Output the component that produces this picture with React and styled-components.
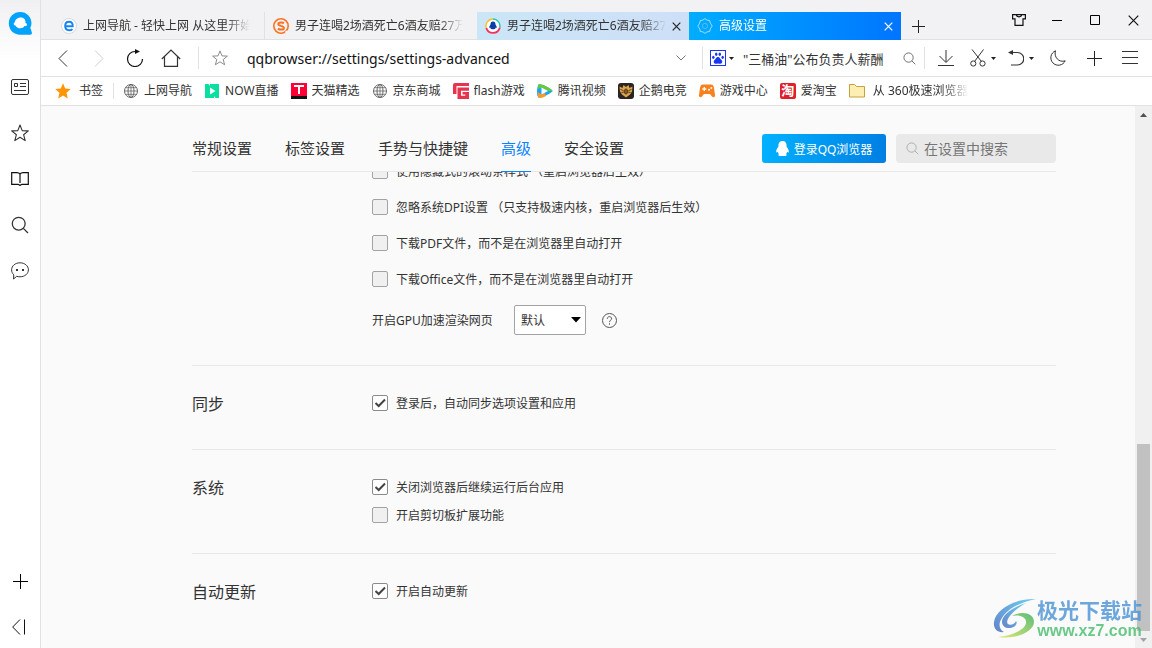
import React from 'react'
import styled, { createGlobalStyle } from 'styled-components';

const GlobalStyle = createGlobalStyle`
  * {
    box-sizing: border-box;
  }
  body {
    margin: 0;
    color: #333;
    background: #fafafa;
    font-family: 'Noto Sans', 'Noto Sans CJK SC', sans-serif;
    font-size: 12px;
  }
  button, input, select {
    font-family: inherit;
    color: inherit;
  }
  svg {
    display: block;
    flex: none;
  }
`

const Shell = styled.div`
  display: flex;
  min-height: 100vh;
  position: relative;
`

const Sidebar = styled.aside`
  flex: none;
  width: 41px;
  display: flex;
  flex-direction: column;
  align-items: center;
  gap: 4px;
  border-right: 1px solid #e1e1e3;
  background: linear-gradient(#f0f0f2, #fff 60px);
`

const Brand = styled.div`
  height: 62px;
  padding-top: 11px;
`

const SideButton = styled.button`
  display: flex;
  align-items: center;
  justify-content: center;
  width: 40px;
  height: 42px;
  padding: 0;
  border: none;
  background: none;
  cursor: pointer;
`

const Spacer = styled.div`
  flex: 1;
`

const Browser = styled.div`
  flex: 1;
  min-width: 0;
  display: flex;
  flex-direction: column;
`

const TabBar = styled.div`
  display: flex;
  height: 40px;
  padding-left: 12px;
  background: #f2f2f4;
  box-shadow: inset 0 -1px #e1e1e3;
`

const Tab = styled.div`
  display: flex;
  align-items: center;
  flex: 0 1 212px;
  min-width: 0;
  height: 28px;
  margin-top: 12px;
  padding: 0 8px;
  background: ${props => props.$bg || 'none'};
  color: ${props => props.$color || '#333'};
  border-right: ${props => props.$line ? '1px solid #e1e1e3' : 'none'};
`

const TabTitle = styled.span`
  flex: 1;
  min-width: 0;
  margin: 0 6px;
  overflow: hidden;
  white-space: nowrap;
  line-height: 20px;
  mask-image: linear-gradient(to left, transparent, #000 24px);
`

const IconButton = styled.button`
  display: flex;
  align-items: center;
  justify-content: center;
  gap: 5px;
  flex: none;
  width: ${props => props.$w || 'auto'};
  height: ${props => props.$h || 'auto'};
  padding: ${props => props.$pad || '0'};
  border: none;
  background: none;
  cursor: pointer;
`

const Toolbar = styled.div`
  display: flex;
  align-items: center;
  height: 37px;
  padding: 0 4px;
  background: #fff;
  border-bottom: 1px solid #e1e1e3;
`

const Divider = styled.span`
  flex: none;
  width: 1px;
  height: ${props => props.$h || '22px'};
  margin: ${props => props.$m || '0'};
  background: #e1e1e3;
`

const AddressInput = styled.input`
  flex: 1;
  min-width: 0;
  height: 30px;
  padding: 0;
  border: none;
  outline: none;
  background: none;
  color: #111;
  font-size: 14px;
`

const SearchBox = styled.form`
  display: flex;
  align-items: center;
  flex: 0 1 221px;
  min-width: 0;
  padding: 0 8px 0 7px;
`

const SearchInput = styled.input`
  flex: 1;
  min-width: 0;
  height: 30px;
  margin-left: 9px;
  padding: 0;
  border: none;
  outline: none;
  background: none;
  font-size: 13px;
`

const Bookmarks = styled.nav`
  display: flex;
  align-items: center;
  height: 29px;
  padding-left: 14px;
  background: #fff;
  border-bottom: 1px solid #e1e1e3;
  overflow: hidden;
`

const Bookmark = styled.a`
  display: flex;
  align-items: center;
  gap: ${props => props.$wide ? '8px' : '5px'};
  flex: none;
  margin-right: 12px;
  color: #333;
  line-height: 20px;
  text-decoration: none;
  white-space: nowrap;
  span {
    max-width: 95px;
    overflow: hidden;
    mask-image: ${props => props.$fade ? 'linear-gradient(to left, transparent, #000 24px)' : 'none'};
  }
`

const Page = styled.div`
  flex: 1;
  display: flex;
  min-height: 0;
`

const Settings = styled.main`
  flex: 1;
  min-width: 0;
  padding: 0 79px 0 151px;
`

const SettingsHeader = styled.header`
  display: flex;
  align-items: center;
  height: 66px;
  padding-top: 20px;
  border-bottom: 1px solid #e8e8e8;
`

const SettingsNav = styled.nav`
  display: flex;
  flex: 1;
  align-self: stretch;
  gap: 33px;
`

const NavLink = styled.a`
  display: flex;
  align-items: center;
  margin-bottom: -1px;
  padding-bottom: 2px;
  color: ${props => props.$active ? '#0b84ff' : '#333'};
  border-bottom: 1px solid ${props => props.$active ? '#0b84ff' : 'transparent'};
  font-size: 15px;
  line-height: 22px;
  text-decoration: none;
  white-space: nowrap;
`

const LoginButton = styled.button`
  display: flex;
  align-items: center;
  justify-content: center;
  gap: 5px;
  width: 124px;
  height: 29px;
  margin-right: 10px;
  padding: 0;
  border: none;
  border-radius: 3px;
  background: linear-gradient(100deg, #00b2ff, #007ee2);
  color: #fff;
  font-size: 12px;
  cursor: pointer;
`

const SettingsSearch = styled.label`
  display: flex;
  align-items: center;
  gap: 5px;
  width: 160px;
  height: 29px;
  padding: 0 10px;
  border-radius: 4px;
  background: #e9e9e9;
  input {
    flex: 1;
    min-width: 0;
    padding: 0;
    border: none;
    outline: none;
    background: none;
    font-size: 14px;
  }
  input::placeholder {
    color: #757575;
  }
`

const Scroller = styled.div`
  overflow: hidden;
`

const Section = styled.section`
  display: flex;
  min-height: 84px;
  padding: 23px 0 24px;
  border-bottom: ${props => props.$last ? 'none' : '1px solid #e8e8e8'};
`

/* the page is scrolled, so the first option is partly under the header */
const ScrolledSection = styled(Section)`
  margin-top: -19px;
  padding: 0 0 22px;
`

const SectionTitle = styled.h2`
  flex: none;
  width: 180px;
  margin: 0;
  font-size: 16px;
  font-weight: 400;
  line-height: 30px;
`

const Options = styled.div`
  flex: 1;
  min-width: 0;
`

const OptionRow = styled.label`
  display: flex;
  align-items: center;
  gap: 8px;
  height: ${props => props.$tall ? '36px' : '28px'};
  white-space: nowrap;
`

const CheckWrap = styled.span`
  position: relative;
  flex: none;
  width: 16px;
  height: 16px;
  svg {
    position: absolute;
    top: 0;
    left: 0;
    pointer-events: none;
    visibility: hidden;
  }
  input:checked + svg {
    visibility: visible;
  }
`

const CheckInput = styled.input`
  display: block;
  appearance: none;
  width: 16px;
  height: 16px;
  margin: 0;
  border: 1px solid #a3a3a3;
  border-radius: 2px;
  background: #f0f0f0;
  &:checked {
    border-color: #8b8b8b;
    background: #fff;
  }
`

const SelectRow = styled.div`
  display: flex;
  align-items: center;
  height: 46px;
  label {
    width: 142px;
  }
`

const SelectWrap = styled.span`
  position: relative;
  margin-right: 16px;
  svg {
    position: absolute;
    right: 5px;
    top: 12px;
    pointer-events: none;
  }
`

const Select = styled.select`
  display: block;
  appearance: none;
  width: 72px;
  height: 30px;
  padding: 0 6px;
  border: 1px solid #a3a3a3;
  border-radius: 2px;
  background: #fff;
  font-size: 12px;
`

const ScrollBar = styled.div`
  display: flex;
  flex-direction: column;
  align-items: center;
  flex: none;
  width: 17px;
  padding: 7px 0 6px;
  background: #f0f0f0;
`

const ScrollGap = styled.div`
  flex: 324;
`

const ScrollThumb = styled.div`
  flex: 186;
  width: 13px;
  margin-bottom: 7px;
  background: #c1c1c1;
`

const Watermark = styled.div`
  position: absolute;
  right: 10px;
  bottom: 8px;
  display: flex;
  align-items: center;
  gap: 1px;
  opacity: 0.8;
  strong {
    display: block;
    color: #4a92d4;
    font-size: 21px;
    font-weight: 700;
    line-height: 24px;
  }
  span {
    display: block;
    color: #45bd6c;
    font-family: 'Liberation Sans', sans-serif;
    font-size: 16px;
    font-weight: 700;
    line-height: 18px;
    text-align: center;
  }
`

const Icon = ({ w = 16, h = w, color = '#333', sw = 1, children }) => (
  <svg width={w} height={h} viewBox={`0 0 ${w} ${h}`} fill="none" stroke={color} strokeWidth={sw} aria-hidden="true">
    {children}
  </svg>
)

const Caret = () => <Icon w={5} h={3}><path d="M0 0h5L2.5 3z" fill="#222" stroke="none" /></Icon>

const Close = ({ color, size = 10 }) => (
  <Icon w={size} color={color} sw={1.2}><path d={`M.7.7l${size - 1.4} ${size - 1.4}M${size - .7}.7L.7 ${size - .7}`} /></Icon>
)

const Plus = ({ size = 15, color = '#222' }) => (
  <Icon w={size} color={color} sw={1}><path d={`M${size / 2} 0v${size}M0 ${size / 2}h${size}`} /></Icon>
)

const Magnifier = ({ size = 14, color = '#666' }) => (
  <svg width={size} height={size} viewBox="0 0 14 14" fill="none" stroke={color} strokeWidth="1" aria-hidden="true">
    <circle cx="6" cy="6" r="5" /><path d="M9.6 9.6l3.6 3.6" />
  </svg>
)

const BrandLogo = () => (
  <Icon w={25} h={25}>
    <path d="M12.2 1C5.6 1 .8 5.9.8 12.3s4.700 11.500 11.400 11.500h9.700c1.700 0 2.200-.7 2-2L23 18.500c-.2-.8-.5-1.200-.7-1.600.8-1.500 1.200-3 1.200-4.600C23.500 5.900 18.700 1 12.200 1z" fill="#04a3fb" stroke="none" />
    <path d="M13 6.600c-3 0-5.800 1.600-6.100 4.700-.9.400-1.400 1.200-1.100 2.100.2.800.9 1.100 1.700 1 .9 1.700 2.600 2.900 4.800 2.900 1.800 0 3.200-.8 4.200-2.200 1.300.3 2.500-.3 2.500-1.500 0-.9-.6-1.500-1.500-1.700.300-2.900-1.600-5.300-4.500-5.300z" fill="#fff" stroke="none" />
  </Icon>
)

const EIcon = () => (
  <Icon>
    <circle cx="8" cy="8" r="7.500" fill="#fff" stroke="#d6d9de" />
    <path d="M4.200 8.200h7.500c.2-2.900-1.300-4.400-3.600-4.400S4.200 5.500 4.200 8.100s1.600 4.200 4 4.200c1.400 0 2.500-.4 3.200-1.200" stroke="#1383f5" strokeWidth="2" />
  </Icon>
)

const SogouIcon = () => (
  <Icon>
    <circle cx="8" cy="8" r="7.200" stroke="#fb7322" strokeWidth="1.600" />
    <path d="M11 5.200C9.800 4.300 5.300 4 5.300 6.200c0 2 5.600 1.300 5.600 3.700 0 2.200-4.400 2-6 .7" stroke="#fb7322" strokeWidth="2" />
    <path d="M12.500 14.500l1.500-1.500" stroke="#fff" strokeWidth="1.500" />
  </Icon>
)

const QQBallIcon = () => (
  <Icon>
    <circle cx="8" cy="8" r="7" fill="#fff" stroke="none" />
    <path d="M8 1a7 7 0 0 0-6.700 9" stroke="#fcc21b" strokeWidth="1.400" />
    <path d="M8 1a7 7 0 0 1 6.800 8.500" stroke="#19c9b5" strokeWidth="1.400" />
    <path d="M1.300 10a7 7 0 0 0 13.500-.5" stroke="#f5325c" strokeWidth="1.800" />
    <path d="M8 3.600c-1.800 0-2.500 1.300-2.500 3-.8 1-1.300 1.900-1.300 2.700 0 .6.500.6 1 .1.500 1.400 1.400 1.900 2.800 1.900s2.300-.5 2.800-1.900c.5.500 1 .5 1-.1 0-.8-.5-1.700-1.300-2.700 0-1.700-.7-3-2.500-3z" fill="#0b3fa5" stroke="none" />
  </Icon>
)

const GearIcon = () => (
  <Icon color="#9bdcff">
    <path d="M8 .6l2 1.500 2.700.4.600 2.600L15.200 8l-1.900 2.900-.6 2.600-2.700.4-2 1.500-2-1.500-2.700-.4-.6-2.600L.8 8l1.900-2.900.6-2.600L6 2.100z" strokeLinejoin="round" />
    <circle cx="8" cy="8" r="2.600" stroke="#4fbcff" />
  </Icon>
)

const StarLine = ({ size = 16, color = '#333' }) => (
  <svg width={size} height={size} viewBox="0 0 18 18" fill="none" stroke={color} strokeWidth="1.100" strokeLinejoin="round" aria-hidden="true">
    <path d="M9 1l2.200 5.600 6.100.3-4.700 3.800 1.600 5.900L9 13.300l-5.200 3.300 1.600-5.900L.7 6.900l6.100-.3z" />
  </svg>
)

const Globe = () => (
  <Icon w={16} color="#666">
    <circle cx="8" cy="8" r="6.500" /><ellipse cx="8" cy="8" rx="3" ry="6.500" /><path d="M1.500 8h13M8 1.500v13M2.500 4.700h11M2.500 11.300h11" strokeWidth=".8" />
  </Icon>
)

const PawIcon = () => (
  <Icon>
    <rect x=".5" y=".5" width="15" height="15" fill="#fff" stroke="#1736ee" />
    <g fill="#1736ee" stroke="none">
      <ellipse cx="3.300" cy="7.300" rx="1.200" ry="1.600" /><ellipse cx="6.200" cy="4.200" rx="1.200" ry="1.700" />
      <ellipse cx="9.800" cy="4.200" rx="1.200" ry="1.700" /><ellipse cx="12.700" cy="7.300" rx="1.200" ry="1.600" />
      <path d="M8 7c-1.800 0-2 1.800-3.300 2.800-1.200 1-1.600 3.700.8 3.900 1 .1 1.500-.3 2.500-.3s1.500.4 2.500.3c2.400-.2 2-2.900.8-3.900C10 8.800 9.800 7 8 7z" />
    </g>
  </Icon>
)

const NowIcon = () => (
  <Icon>
    <path d="M1 1h3.500l1.500 2V1h9v14h-3.500L10 13v2H1z" fill="#08dfa0" stroke="none" />
    <path d="M6 4.500l5.500 3.500L6 11.500z" fill="#fff" stroke="none" />
  </Icon>
)

const TmallIcon = () => (
  <Icon>
    <path d="M0 0h16v13H0z" fill="#ff0036" stroke="none" /><path d="M0 13h16v3H0z" fill="#111" stroke="none" />
    <path d="M3 3h10M8 3v8" stroke="#fff" strokeWidth="2" />
  </Icon>
)

const FlashIcon = () => (
  <Icon>
    <path d="M2 0h14v3H3.500v8H0V2a2 2 0 0 1 2-2z" fill="#e8334f" stroke="none" />
    <path d="M4.500 4.500H16v3.300H8v5h4.300V11.500H9.500V9H16v7H4.500z" fill="#e8334f" stroke="none" />
  </Icon>
)

const VideoIcon = () => (
  <Icon>
    <path d="M1.500 1.500C4 0 15.500 6.500 15.500 8S4 16 1.500 14.500 0 3 1.500 1.500z" fill="#1ba5f5" stroke="none" />
    <path d="M1.500 1.500C4 0 15.500 6.500 15.500 8H11L4.500 4.500 1 6c0-2.500.1-4 .5-4.500z" fill="#67c934" stroke="none" />
    <path d="M.6 9L4.500 11.500 8 10l1 3C6 14.600 2.500 15.500 1.500 14.500 1 14 .7 12 .6 9z" fill="#fb9b22" stroke="none" />
    <path d="M4.500 4.500l6.500 3.500-6.500 3.500z" fill="#fff" stroke="none" />
  </Icon>
)

const EagleIcon = () => (
  <Icon>
    <rect width="16" height="16" rx="3" fill="#2b2420" stroke="none" />
    <path d="M1.500 3.500l3 1.500L5.500 2 8 4l2.500-2 1 3 3-1.500-.5 5-2 3L8 14.500 4 11.500l-2-3z" fill="#dba64f" stroke="none" />
    <path d="M2.500 6.500l3 1M13.500 6.500l-3 1M3.500 9.500l2.500-.5M12.500 9.500L10 9" stroke="#3a2a18" strokeWidth=".8" />
    <ellipse cx="8" cy="8.500" rx="1.600" ry="2.600" fill="#8c5c1f" stroke="#3a2a18" strokeWidth=".8" />
  </Icon>
)

const GamepadIcon = () => (
  <Icon>
    <path d="M4 1.500h8c2 0 2.500 1 3 3.500l1 7c.3 2.500-2 3-3.200 1.300L11 11H5l-1.800 2.300C2 15-.3 14.500 0 12l1-7c.5-2.500 1-3.500 3-3.500z" fill="#f8811d" stroke="none" />
    <path d="M3.300 6h4M5.300 4v4" stroke="#fff" strokeWidth="1.300" />
    <circle cx="10" cy="6.800" r="1" fill="#fff" stroke="none" /><circle cx="12.300" cy="5" r="1" fill="#fff" stroke="none" />
  </Icon>
)

const TaoIcon = styled.i`
  width: 16px;
  height: 16px;
  border-radius: 2px;
  background: #e01f2d;
  color: #fff;
  font-size: 13px;
  font-style: normal;
  font-weight: 700;
  line-height: 15px;
  text-align: center;
`

const FolderIcon = () => (
  <Icon color="#c9a13b"><path d="M.5 1.500h5l2 2h8v10.500H.5z" fill="#fdeeb1" strokeLinejoin="round" /></Icon>
)

const bookmarks = [
  { name: '上网导航', icon: <Globe /> },
  { name: 'NOW直播', icon: <NowIcon /> },
  { name: '天猫精选', icon: <TmallIcon /> },
  { name: '京东商城', icon: <Globe /> },
  { name: 'flash游戏', icon: <FlashIcon /> },
  { name: '腾讯视频', icon: <VideoIcon /> },
  { name: '企鹅电竞', icon: <EagleIcon /> },
  { name: '游戏中心', icon: <GamepadIcon /> },
  { name: '爱淘宝', icon: <TaoIcon>淘</TaoIcon> },
]

const navItems = ['常规设置', '标签设置', '手势与快捷键', '高级', '安全设置']

const Option = ({ text, checked, tall }) => (
  <OptionRow $tall={tall}>
    <CheckWrap>
      <CheckInput type="checkbox" defaultChecked={checked} />
      <Icon color="#444" sw={2}><path d="M3.500 8l3.200 3L13 4.500" /></Icon>
    </CheckWrap>
    {text}
  </OptionRow>
)

const SideMenu = () => (
  <Sidebar>
    <Brand><BrandLogo /></Brand>
    <SideButton aria-label="资讯">
      <Icon w={18} h={16}>
        <rect x=".5" y=".5" width="17" height="15" rx="1.500" />
        <path d="M3.500 4.500h3v3h-3zM9 4.500h6M9 7.500h6M3 11.500h12" />
      </Icon>
    </SideButton>
    <SideButton aria-label="收藏"><StarLine size={18} /></SideButton>
    <SideButton aria-label="阅读">
      <Icon w={18} h={14} color="#111" sw={1.2}>
        <path d="M9 2v9M9 2C8 .8 7 .7 6 .7H.7v11.600H7L9 13.400l2-1.100h6.300V.7H12c-1 0-2 .1-3 1.300z" />
      </Icon>
    </SideButton>
    <SideButton aria-label="搜索"><Magnifier size={18} color="#333" /></SideButton>
    <SideButton aria-label="消息">
      <Icon w={18} h={18}>
        <path d="M9 .8c4.700 0 8.400 3 8.400 7s-3.700 7-8.400 7c-1.200 0-2.300-.2-3.300-.5L2.500 17l.3-4.200C1.400 11.500.6 9.800.6 7.800.6 3.800 4.300.8 9 .8z" />
        <path d="M5 8h2M11 8h2" strokeWidth="2" />
      </Icon>
    </SideButton>
    <Spacer />
    <SideButton aria-label="添加"><Plus color="#000" /></SideButton>
    <SideButton aria-label="收起">
      <Icon w={16} color="#111"><path d="M8 .5L.7 8 8 15.500M12.500 .5v15" /></Icon>
    </SideButton>
  </Sidebar>
)

const Tabs = () => (
  <TabBar>
    <Tab $line><EIcon /><TabTitle>上网导航 - 轻快上网 从这里开始</TabTitle></Tab>
    <Tab><SogouIcon /><TabTitle>男子连喝2场酒死亡6酒友赔27万</TabTitle></Tab>
    <Tab $bg="linear-gradient(90deg, #cbe6f6, #cddff7)">
      <QQBallIcon />
      <TabTitle>男子连喝2场酒死亡6酒友赔27万</TabTitle>
      <IconButton aria-label="关闭标签"><Close color="#222" size={9} /></IconButton>
    </Tab>
    <Tab $bg="linear-gradient(90deg, #00adff, #0075ff)" $color="#fff">
      <GearIcon />
      <TabTitle>高级设置</TabTitle>
      <IconButton aria-label="关闭标签"><Close color="#fff" size={9} /></IconButton>
    </Tab>
    <IconButton $w="34px" $pad="12px 0 0" aria-label="新标签"><Plus size={13} /></IconButton>
    <Spacer />
    <IconButton $w="38px" aria-label="皮肤">
      <Icon w={14} h={12} color="#111" sw={1.2}>
        <path d="M4 .6H.6v4.200H3v6.600h8V4.800h2.400V.6H10C9.500 2 8.500 2.800 7 2.800S4.500 2 4 .6zM4 .6h6" />
      </Icon>
    </IconButton>
    <IconButton $w="38px" aria-label="最小化"><Icon w={10} h={10} color="#000"><path d="M0 5.500h10" /></Icon></IconButton>
    <IconButton $w="38px" aria-label="最大化"><Icon w={10} h={10} color="#000"><path d="M.5.5h9v9h-9z" /></Icon></IconButton>
    <IconButton $w="38px" aria-label="关闭"><Close color="#111" size={11} /></IconButton>
  </TabBar>
)

const AddressBar = () => (
  <Toolbar>
    <IconButton $w="36px" $h="36px" aria-label="后退"><Icon w={10} h={17}><path d="M9 .5L1 8.500l8 8" /></Icon></IconButton>
    <IconButton $w="36px" $h="36px" aria-label="前进"><Icon w={10} h={17} color="#ccc"><path d="M1 .5l8 8-8 8" /></Icon></IconButton>
    <IconButton $w="36px" $h="36px" aria-label="刷新">
      <Icon w={18} h={18} color="#111" sw={1.2}>
        <path d="M10 2.500H9a7.500 7.500 0 1 0 7.500 7.500" /><path d="M9 0l5 2.500L9 5z" fill="#111" stroke="none" />
      </Icon>
    </IconButton>
    <IconButton $w="36px" $h="36px" aria-label="主页">
      <Icon w={20} h={18} sw={1.2}><path d="M.8 10L10 1l9.200 9M3.500 7.500v9.900h13V7.500" /></Icon>
    </IconButton>
    <Divider $m="0 13px 0 9px" />
    <IconButton $pad="0 19px 0 0" aria-label="收藏此页"><StarLine color="#888" /></IconButton>
    <AddressInput aria-label="地址" defaultValue="qqbrowser://settings/settings-advanced" />
    <IconButton $pad="0 16px 0 10px" aria-label="展开"><Icon w={10} h={6} color="#777"><path d="M.5.5L5 5 9.500.5" /></Icon></IconButton>
    <Divider />
    <SearchBox>
      <PawIcon />
      <IconButton type="button" $pad="0 0 0 3px" aria-label="搜索引擎"><Caret /></IconButton>
      <SearchInput aria-label="搜索" defaultValue={'"三桶油"公布负责人薪酬'} />
      <IconButton type="button" aria-label="搜索"><Magnifier size={13} /></IconButton>
    </SearchBox>
    <Divider $m="0 3px 0 0" />
    <IconButton $pad="10px" aria-label="下载">
      <Icon w={16} h={16}><path d="M8 0v12M1.500 6L8 12.500 14.500 6M0 15.500h16" /></Icon>
    </IconButton>
    <IconButton $pad="10px 6px" aria-label="截图">
      <Icon w={16} h={18}>
        <path d="M2 .5l9.500 12M13.500 .5L4.500 12.500" /><circle cx="3.300" cy="14.500" r="2.600" /><circle cx="12.500" cy="14.500" r="2.600" />
      </Icon>
      <Caret />
    </IconButton>
    <IconButton $pad="10px 6px" aria-label="恢复">
      <Icon w={16} h={16}>
        <path d="M3 2.500h6.500a6.200 6.200 0 0 1 0 12.500H3" strokeWidth="1.200" /><path d="M0 2.500L5 0v5z" fill="#333" stroke="none" />
      </Icon>
      <Caret />
    </IconButton>
    <IconButton $pad="10px" aria-label="夜间模式">
      <Icon w={16} h={16}><path d="M5.500.8a7.500 7.500 0 1 0 9.700 10C9 13 3.500 7 5.500.8z" strokeLinejoin="round" /></Icon>
    </IconButton>
    <IconButton $w="36px" $pad="10px 0" aria-label="添加应用"><Plus /></IconButton>
    <IconButton $pad="10px" aria-label="菜单">
      <Icon w={16} h={14}><path d="M0 .5h16M0 6.500h16M0 12.500h16" /></Icon>
    </IconButton>
  </Toolbar>
)

const BookmarkBar = () => (
  <Bookmarks>
    <Bookmark href="#" $wide>
      <Icon w={16} h={16}><path d="M8 .3l2.200 5.300 5.600.5-4.300 3.700 1.300 5.600L8 12.400l-4.800 3 1.300-5.600L.2 6.100l5.600-.5z" fill="#ff9500" stroke="none" /></Icon>
      <span>书签</span>
    </Bookmark>
    <Divider $h="16px" $m="0 9px 0 -2px" />
    {bookmarks.map(item => (
      <Bookmark href="#" key={item.name}>{item.icon}<span>{item.name}</span></Bookmark>
    ))}
    <Bookmark href="#" $wide $fade><FolderIcon /><span>从 360极速浏览器导入</span></Bookmark>
  </Bookmarks>
)

const App = () => {
  return (
    <>
      <GlobalStyle />
      <Shell>
        <SideMenu />
        <Browser>
          <Tabs />
          <AddressBar />
          <BookmarkBar />
          <Page>
            <Settings>
              <SettingsHeader>
                <SettingsNav>
                  {navItems.map(item => <NavLink href="#" key={item} $active={item === '高级'}>{item}</NavLink>)}
                </SettingsNav>
                <LoginButton>
                  <Icon w={13} h={15}>
                    <path d="M6.500 0C3.700 0 2.400 2 2.400 4.500v1.300C1 7.500.2 9 .2 10.700c0 1.100.7 1.200 1.500.1.200.9.700 1.600 1.300 2.200-1.200.6-.8 2 .8 2h5.400c1.600 0 2-1.400.8-2 .6-.6 1.100-1.300 1.300-2.200.8 1.100 1.500 1 1.500-.1 0-1.700-.8-3.200-2.200-4.900V4.500C10.600 2 9.300 0 6.500 0z" fill="#fff" stroke="none" />
                  </Icon>
                  登录QQ浏览器
                </LoginButton>
                <SettingsSearch>
                  <Magnifier size={13} color="#aaa" />
                  <input placeholder="在设置中搜索" aria-label="在设置中搜索" />
                </SettingsSearch>
              </SettingsHeader>
              <Scroller>
                <ScrolledSection>
                  <SectionTitle />
                  <Options>
                    <Option tall text="使用隐藏式的滚动条样式 （重启浏览器后生效）" />
                    <Option tall text="忽略系统DPI设置 （只支持极速内核，重启浏览器后生效）" />
                    <Option tall text="下载PDF文件，而不是在浏览器里自动打开" />
                    <Option tall text="下载Office文件，而不是在浏览器里自动打开" />
                    <SelectRow>
                      <label htmlFor="gpu">开启GPU加速渲染网页</label>
                      <SelectWrap>
                        <Select id="gpu" defaultValue="默认">
                          <option>默认</option>
                          <option>开启</option>
                          <option>关闭</option>
                        </Select>
                        <Icon w={10} h={6}><path d="M0 0h10L5 5.500z" fill="#000" stroke="none" /></Icon>
                      </SelectWrap>
                      <Icon w={15} h={15} color="#555">
                        <circle cx="7.500" cy="7.500" r="7" />
                        <path d="M5.300 5.800c0-3 4.500-2.800 4.300 0-.1 1.500-2.100 1.500-2.100 3.300M7.500 10.300v1.400" />
                      </Icon>
                    </SelectRow>
                  </Options>
                </ScrolledSection>
                <Section>
                  <SectionTitle>同步</SectionTitle>
                  <Options><Option checked text="登录后，自动同步选项设置和应用" /></Options>
                </Section>
                <Section>
                  <SectionTitle>系统</SectionTitle>
                  <Options>
                    <Option checked text="关闭浏览器后继续运行后台应用" />
                    <Option text="开启剪切板扩展功能" />
                  </Options>
                </Section>
                <Section $last>
                  <SectionTitle>自动更新</SectionTitle>
                  <Options><Option checked text="开启自动更新" /></Options>
                </Section>
              </Scroller>
            </Settings>
            <ScrollBar>
              <Icon w={7} h={4}><path d="M3.500 0L7 4H0z" fill="#505050" stroke="none" /></Icon>
              <ScrollGap />
              <ScrollThumb />
              <Icon w={7} h={4}><path d="M0 0h7L3.500 4z" fill="#a3a3a3" stroke="none" /></Icon>
            </ScrollBar>
          </Page>
        </Browser>
        <Watermark>
          <svg width="43" height="42" viewBox="0 0 43 42" aria-hidden="true">
            <defs>
              <linearGradient id="swirlBlue" x1="1" y1="0" x2="0" y2="1">
                <stop offset="0" stopColor="#4cc3f0" /><stop offset="1" stopColor="#3f68bd" />
              </linearGradient>
              <linearGradient id="swirlGreen" x1="1" y1="0" x2="0" y2="1">
                <stop offset="0" stopColor="#36ae5c" /><stop offset="1" stopColor="#d9e34a" />
              </linearGradient>
            </defs>
            <path d="M43 1C24 0 3 10 1 24c-1 7 4 11 10 10-5-3-6-8-2-14C14 11 28 4 43 1z" fill="url(#swirlBlue)" />
            <path d="M33 5C20 9 9 17 9 24c0 6 8 8 13 4 2-2 2-4 1-5-1 3-6 5-8 3C11 22 22 11 33 5z" fill="url(#swirlBlue)" />
            <path d="M19 18c8-5 22-4 22 6 0 9-17 18-36 15 13-1 27-7 28-14 1-6-7-9-14-7z" fill="url(#swirlGreen)" />
          </svg>
          <div>
            <strong>极光下载站</strong>
            <span>www.xz7.com</span>
          </div>
        </Watermark>
      </Shell>
    </>
  )
}

export default App
